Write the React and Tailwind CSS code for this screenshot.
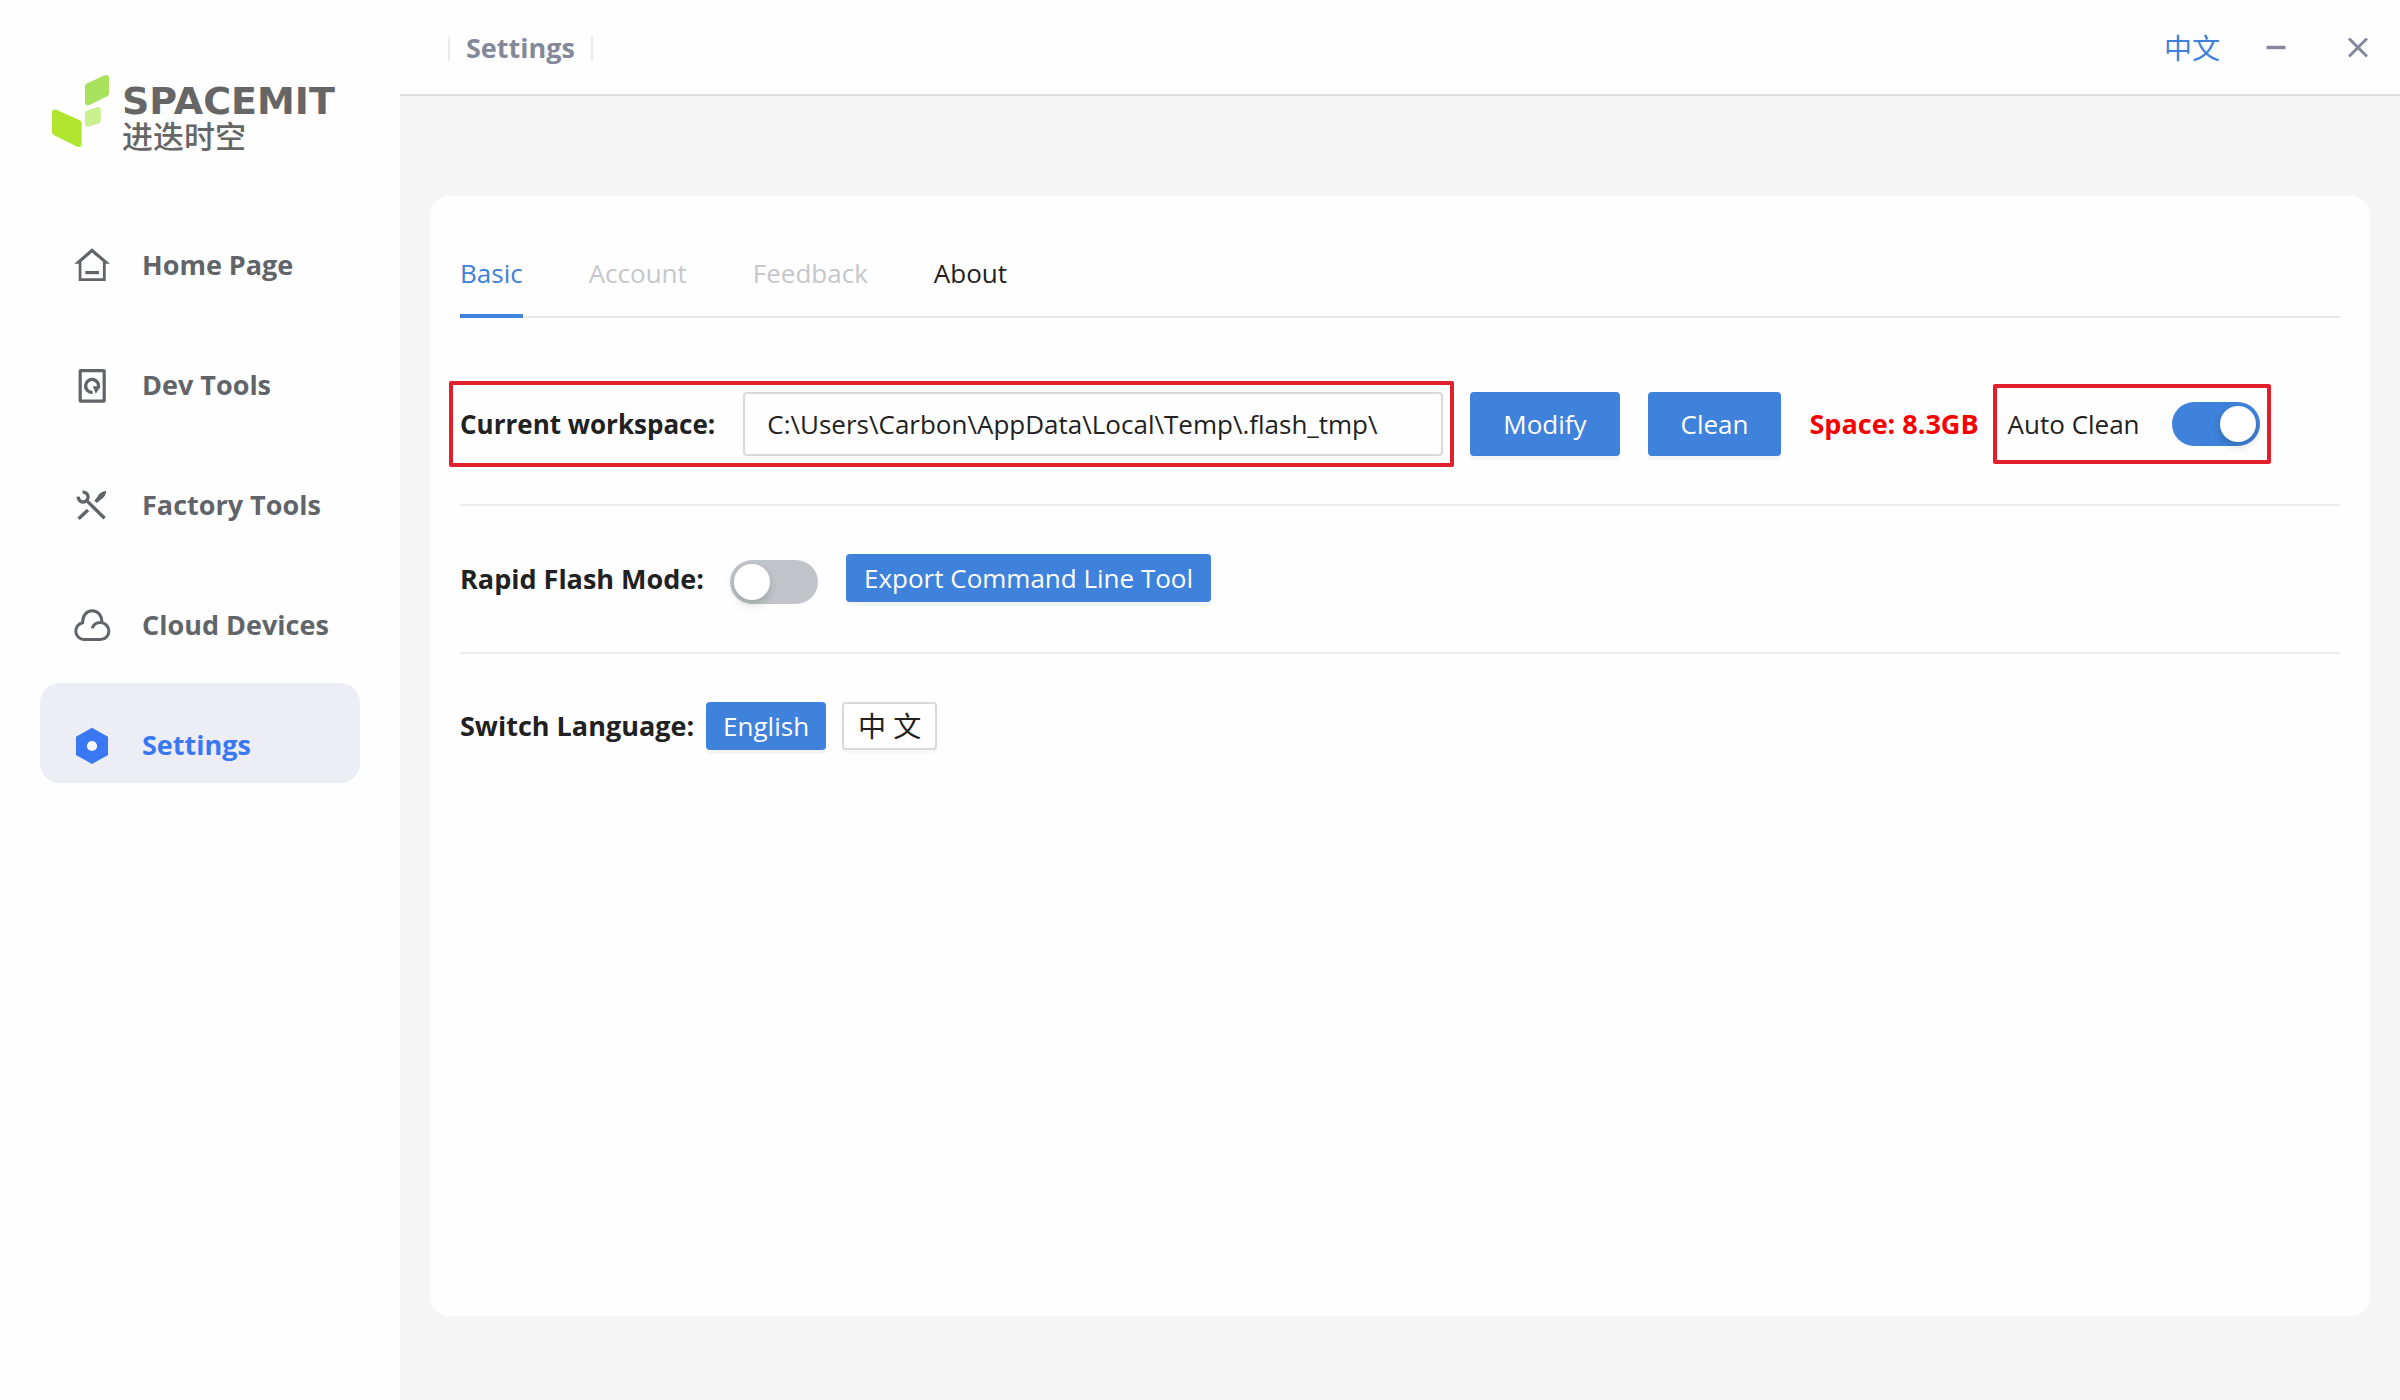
import React from 'react';

const HomeIcon = () => (
  <svg viewBox="0 0 36 36" className="size-9 overflow-visible" fill="currentColor" aria-hidden="true">
    <path
      fillRule="evenodd"
      d="M18 1.3 36 16.7H31.7V34H4.7V16.7H0.3ZM18 5.6 7.4 14.8V31.2H28.9V14.8Z"
    />
    <path d="M11.3 24H25V27.2H11.3Z" />
  </svg>
);

const DevIcon = () => (
  <svg viewBox="0 0 36 36" className="size-9 overflow-visible" fill="none" stroke="currentColor" aria-hidden="true">
    <rect x="6.2" y="3.7" width="24" height="30.5" rx="0.5" strokeWidth="3.2" />
    <path d="M18.6 25.4A6.5 6.5 0 1 1 24.4 20.5" strokeWidth="3.4" />
    <path d="M18.8 19.2 26.6 19.6 21.8 26.8Z" fill="currentColor" stroke="none" />
  </svg>
);

const FactoryIcon = () => (
  <svg viewBox="0 0 36 36" className="size-9 overflow-visible" fill="none" stroke="currentColor" aria-hidden="true">
    <path d="M8.6 5.2A4.9 4.9 0 1 1 4.3 9.6" strokeWidth="3.4" />
    <path d="M12.4 13.4 30.6 31.2" strokeWidth="3.4" />
    <path d="M4.6 31.8 14 23" strokeWidth="3.4" />
    <path
      d="M20.4 13.8 23.8 9.2C25 6.6 28 4.4 32 4 32.2 7.8 30 10.9 27 12.4L22.8 16Z"
      fill="currentColor"
      stroke="none"
    />
  </svg>
);

const CloudIcon = () => (
  <svg viewBox="0 0 36 36" className="size-9 overflow-visible" fill="none" stroke="currentColor" strokeWidth="3" aria-hidden="true">
    <path d="M18.3 21.4C19.3 17.8 22.4 15.6 26.4 15.6A8.5 8.5 0 0 1 26.4 32.6H9.6A8.5 8.5 0 0 1 8.6 15.8C8.6 8.4 12.6 3.8 18.2 3.8 23.6 3.8 27.8 8 28 15.4" />
  </svg>
);

const SettingsIcon = () => (
  <svg viewBox="0 0 36 36" className="size-9 overflow-visible" aria-hidden="true">
    <path d="M18 0.8 34 9.8V27.9L18 37 2 27.9V9.8Z" fill="currentColor" />
    <circle cx="18" cy="19" r="5.1" fill="#f7f9ff" />
  </svg>
);

const LogoMark = () => (
  <svg viewBox="0 0 60 78" className="h-[78px] w-[60px] shrink-0" strokeLinejoin="round" strokeWidth="6" aria-hidden="true">
    <path d="M38 14.2 56 6V21.6L38 30.4Z" fill="#a8e15b" stroke="#a8e15b" />
    <path d="M38 41.4 47.8 38V48.6L38 51.6Z" fill="#c9f08c" stroke="#c9f08c" />
    <path d="M5 40.4 28.6 51V72L5 60.2Z" fill="#b0e52e" stroke="#b0e52e" />
  </svg>
);

const navItems = [
  { name: 'Home Page', icon: HomeIcon },
  { name: 'Dev Tools', icon: DevIcon },
  { name: 'Factory Tools', icon: FactoryIcon },
  { name: 'Cloud Devices', icon: CloudIcon },
  { name: 'Settings', icon: SettingsIcon, active: true },
];

const tabs = [
  { name: 'Basic', active: true },
  { name: 'Account', disabled: true },
  { name: 'Feedback', disabled: true },
  { name: 'About' },
];

const Toggle = ({ id, checked, onChange, className = '' }) => (
  <input
    id={id}
    type="checkbox"
    role="switch"
    checked={checked}
    onChange={e => onChange(e.target.checked)}
    className={`h-11 w-[88px] shrink-0 cursor-pointer appearance-none rounded-full p-1 before:block before:size-9 before:rounded-full before:bg-white before:shadow-[0_4px_8px_rgba(0,35,11,0.2)] ${
      checked ? 'bg-[#3f82dc] before:ml-11' : 'bg-[#c1c5ca]'
    } ${className}`}
  />
);

const Button = ({ primary, className = '', children }) => (
  <button
    type="button"
    className={`shrink-0 rounded-sm border-2 ${
      primary
        ? 'border-[#3f82dc] bg-[#3f82dc] text-white shadow-[0_4px_0_rgba(0,0,0,0.04)]'
        : 'border-[#d9d9d9] bg-white shadow-[0_4px_0_rgba(0,0,0,0.02)]'
    } ${className}`}
  >
    {children}
  </button>
);

const Sidebar = () => (
  <aside className="w-[400px] shrink-0 bg-[#fefefe]">
    <div className="flex h-[150px] gap-3 pt-[72px] pl-[50px] text-[#666]">
      <LogoMark />
      <div className="pt-2">
        <div className="font-['DejaVu_Sans',sans-serif] text-[38px] leading-[42px] font-bold">SPACEMIT</div>
        <div className="font-['Liberation_Sans','Noto_Sans_CJK_SC',sans-serif] text-[31px] leading-8 font-medium">
          进迭时空
        </div>
      </div>
    </div>
    <nav className="mt-[53px] flex flex-col gap-5 px-10">
      {navItems.map(({ name, icon: Icon, active }) => (
        <a
          key={name}
          href="#"
          className={`flex h-[100px] items-center gap-8 rounded-[20px] pt-6 pl-[34px] text-[27px] font-bold ${
            active ? 'bg-[#ecedf5] text-[#3977f3]' : 'text-[#616569]'
          }`}
        >
          <Icon />
          {name}
        </a>
      ))}
    </nav>
  </aside>
);

const TopBar = () => (
  <header className="flex h-24 items-center justify-between border-b-2 border-[#dedede] bg-[#fefefe] pt-0.5 pr-8 pl-12">
    <h1 className="flex items-center gap-4 text-[27px] font-bold text-[#83889a]">
      <span className="h-[25px] w-0.5 bg-[#ebebeb]" />
      Settings
      <span className="h-[25px] w-0.5 bg-[#ebebeb]" />
    </h1>
    <div className="flex items-center text-[#83889a]">
      <button type="button" className="mr-[46px] text-[28px] text-[#3f80db]">
        中文
      </button>
      <button type="button" aria-label="Minimize" className="mr-[62px]">
        <svg viewBox="0 0 20 20" className="size-5" stroke="currentColor" strokeWidth="3.4" aria-hidden="true">
          <path d="M0.5 9.5H19.5" />
        </svg>
      </button>
      <button type="button" aria-label="Close">
        <svg viewBox="0 0 20 20" className="size-5" stroke="currentColor" strokeWidth="3" aria-hidden="true">
          <path d="M1 0.5 19 18.5M19 0.5 1 18.5" />
        </svg>
      </button>
    </div>
  </header>
);

const App = () => {
  const [autoClean, setAutoClean] = React.useState(true);
  const [rapidFlash, setRapidFlash] = React.useState(false);
  const [workspace, setWorkspace] = React.useState('C:\\Users\\Carbon\\AppData\\Local\\Temp\\.flash_tmp\\');

  return (
    <div className="flex min-h-screen bg-[#f5f5f5] font-['Open_Sans','Noto_Sans_CJK_SC',sans-serif] text-[26px] leading-9 text-[#212121]">
      <Sidebar />

      <div className="flex min-w-0 flex-1 flex-col">
        <TopBar />

        <main className="mx-[30px] mt-[100px] mb-[84px] flex-1 rounded-[20px] bg-[#fefefe] px-[30px]">
          {/* Tabs */}
          <div className="flex h-[122px] gap-[66px] border-b-2 border-[#e6e7e9]" role="tablist">
            {tabs.map(tab => (
              <button
                key={tab.name}
                type="button"
                role="tab"
                aria-selected={Boolean(tab.active)}
                disabled={tab.disabled}
                className={`-mb-0.5 border-b-4 pt-9 ${
                  tab.active ? 'border-[#3f82dc] text-[#3f80db]' : 'border-transparent'
                } ${tab.disabled ? 'text-[#c4c7cb]' : ''}`}
              >
                {tab.name}
              </button>
            ))}
          </div>

          {/* Workspace */}
          <div className="flex items-center border-b-2 border-[#ececec] pt-[63px] pb-[37px]">
            <div className="-ml-[11px] flex items-center gap-7 rounded-xs border-4 border-[#e2202b] p-[7px]">
              <label htmlFor="workspace" className="shrink-0 font-bold">
                Current workspace:
              </label>
              <input
                id="workspace"
                type="text"
                value={workspace}
                onChange={e => setWorkspace(e.target.value)}
                className="h-16 w-[700px] min-w-0 rounded-sm border-2 border-[#d9d9d9] px-[22px]"
              />
            </div>
            <Button primary className="ml-4 h-16 px-[31px]">
              Modify
            </Button>
            <Button primary className="ml-7 h-16 px-[31px]">
              Clean
            </Button>
            <span className="ml-7 shrink-0 text-[27px] font-bold text-[#f80000]">Space: 8.3GB</span>
            <div className="ml-3.5 flex h-20 shrink-0 items-center gap-8 rounded-xs border-4 border-[#e2202b] pr-[7px] pl-[11px]">
              <label htmlFor="auto-clean">Auto Clean</label>
              <Toggle id="auto-clean" checked={autoClean} onChange={setAutoClean} />
            </div>
          </div>

          {/* Rapid flash mode */}
          <div className="flex items-center gap-[26px] border-b-2 border-[#ececec] py-12">
            <label htmlFor="rapid-flash" className="text-[27px] font-bold">
              Rapid Flash Mode:
            </label>
            <div className="flex h-[50px] gap-7">
              <Toggle id="rapid-flash" checked={rapidFlash} onChange={setRapidFlash} className="self-end" />
              <Button primary className="h-12 px-4">
                Export Command Line Tool
              </Button>
            </div>
          </div>

          {/* Language */}
          <div className="flex items-center gap-3 pt-12">
            <span className="text-[27px] font-bold">Switch Language:</span>
            <div className="flex gap-4">
              <Button primary className="h-12 px-[15px]">
                English
              </Button>
              <Button className="h-12 px-3.5 text-[28px]">中 文</Button>
            </div>
          </div>
        </main>
      </div>
    </div>
  );
};

export default App;
